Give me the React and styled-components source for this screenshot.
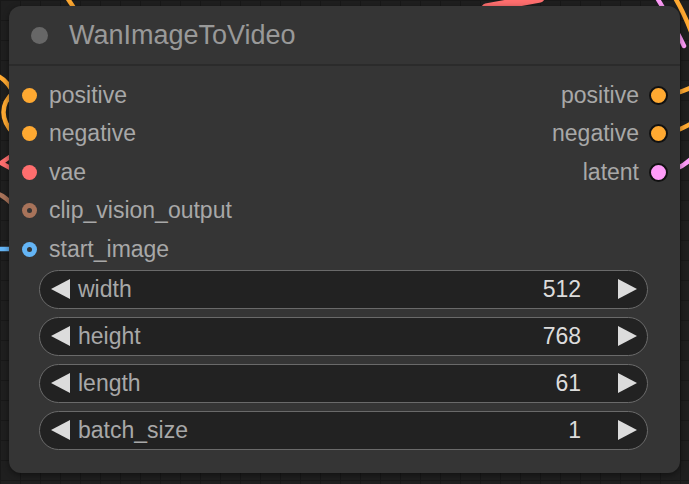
import React from 'react';
import styled, { createGlobalStyle } from 'styled-components';

const GlobalStyle = createGlobalStyle`
  html, body {
    margin: 0;
    padding: 0;
    background: #1f1f1f;
  }
  * {
    box-sizing: border-box;
  }
`;

const Canvas = styled.div`
  position: relative;
  width: 689px;
  height: 484px;
  overflow: hidden;
  padding: 6px 0 0 9px;
  background-color: #1f1f1f;
  background-image:
    linear-gradient(to right, #181818 1px, transparent 1px),
    linear-gradient(to bottom, #181818 1px, transparent 1px);
  background-size: 20px 20px;
  font-family: 'Liberation Sans', Arial, sans-serif;
`;

const Wires = styled.svg`
  position: absolute;
  inset: 0;
  pointer-events: none;
`;

const Node = styled.div`
  position: relative;
  width: 671px;
  height: 467px;
  background: #353535;
  border-radius: 12px;
  box-shadow: 0 2px 6px rgba(0, 0, 0, 0.45);
  display: flex;
  flex-direction: column;
`;

const TitleBar = styled.div`
  height: 60px;
  display: flex;
  align-items: center;
  gap: 21px;
  padding-left: 22px;
  border-bottom: 2px solid #2b2b2b;
`;

const TitleDot = styled.span`
  width: 17px;
  height: 17px;
  border-radius: 50%;
  background: #676767;
`;

const Title = styled.span`
  font-size: 27px;
  color: #999;
`;

const Slots = styled.div`
  display: flex;
  justify-content: space-between;
  padding: 10px 0 0;
`;

const SlotColumn = styled.div`
  display: flex;
  flex-direction: column;
  align-items: ${({ $right }) => ($right ? 'flex-end' : 'flex-start')};
`;

const Slot = styled.div`
  height: 38.5px;
  display: flex;
  align-items: center;
  gap: ${({ $right }) => ($right ? '10px' : '12px')};
  padding: ${({ $right }) => ($right ? '0 12px 0 0' : '0 0 0 13px')};
  font-size: 23px;
  color: #a8a8a8;
`;

const Dot = styled.span`
  width: ${({ $linked }) => ($linked ? '19px' : '15px')};
  height: ${({ $linked }) => ($linked ? '19px' : '15px')};
  border-radius: 50%;
  background: ${({ $color }) => $color};
  border: ${({ $linked }) => ($linked ? '2px solid #111' : 'none')};
  display: flex;
  align-items: center;
  justify-content: center;

  &::after {
    content: '';
    display: ${({ $hollow }) => ($hollow ? 'block' : 'none')};
    width: 5px;
    height: 5px;
    border-radius: 50%;
    background: #353535;
  }
`;

const Widgets = styled.div`
  display: flex;
  flex-direction: column;
  gap: 8px;
  padding: 1px 32px 0 30px;
`;

const Widget = styled.div`
  height: 39px;
  display: flex;
  align-items: center;
  padding: 0 10px 0 11px;
  background: #222;
  border: 1.5px solid #6a6a6a;
  border-radius: 20px;
  font-size: 23px;
`;

const Arrow = styled.span`
  width: 0;
  height: 0;
  border-top: 10px solid transparent;
  border-bottom: 10px solid transparent;
  ${({ $dir }) =>
    $dir === 'left'
      ? 'border-right: 19px solid #dcdcdc;'
      : 'border-left: 19px solid #dcdcdc;'}
`;

const WidgetLabel = styled.span`
  flex: 1;
  margin-left: 8px;
  color: #a8a8a8;
`;

const WidgetValue = styled.span`
  color: #dcdcdc;
  margin-right: 37px;
`;

const inputs = [
  { name: 'positive', color: '#ffa931' },
  { name: 'negative', color: '#ffa931' },
  { name: 'vae', color: '#ff6e6e' },
  { name: 'clip_vision_output', color: '#a8735a', hollow: true },
  { name: 'start_image', color: '#64b5f6', hollow: true },
];

const outputs = [
  { name: 'positive', color: '#ffa931' },
  { name: 'negative', color: '#ffa931' },
  { name: 'latent', color: '#ff9cf9' },
];

const widgets = [
  { name: 'width', value: 512 },
  { name: 'height', value: 768 },
  { name: 'length', value: 61 },
  { name: 'batch_size', value: 1 },
];

const App = () => (
  <>
    <GlobalStyle />
    <Canvas>
      <Wires width="689" height="484" viewBox="0 0 689 484">
        <g fill="none" strokeWidth="4.5" strokeLinecap="round">
          <path d="M 66 -4 L 74 8" stroke="#ffa931" />
          <path d="M -2 76 C 6 80, 10 86, 14 94" stroke="#ffa931" />
          <path d="M 14 92 C 0 104, 0 120, 14 134" stroke="#ffa931" />
          <path d="M 14 154 L 1 163 L 14 170" stroke="#ff6e6e" />
          <path d="M -2 194 C 4 196, 8 200, 14 206" stroke="#a8735a" />
          <path d="M -2 249 L 24 249" stroke="#64b5f6" />
          <path d="M 660 95 C 672 95, 680 93, 692 87" stroke="#ffa931" />
          <path d="M 660 133 C 672 133, 680 130, 692 123" stroke="#ffa931" />
          <path d="M 660 172 C 672 172, 682 168, 692 158" stroke="#ff9cf9" />
          <path d="M 656 -4 C 664 10, 674 24, 684 46" stroke="#ff9cf9" />
          <path d="M 674 -4 C 680 6, 686 18, 692 34" stroke="#ffa931" />
          <path d="M 486 8 L 540 -2" stroke="#ff6e6e" strokeWidth="9" />
        </g>
      </Wires>
      <Node>
        <TitleBar>
          <TitleDot />
          <Title>WanImageToVideo</Title>
        </TitleBar>
        <Slots>
          <SlotColumn>
            {inputs.map((s) => (
              <Slot key={s.name}>
                <Dot $color={s.color} $hollow={s.hollow} />
                {s.name}
              </Slot>
            ))}
          </SlotColumn>
          <SlotColumn $right>
            {outputs.map((s) => (
              <Slot key={s.name} $right>
                {s.name}
                <Dot $color={s.color} $linked />
              </Slot>
            ))}
          </SlotColumn>
        </Slots>
        <Widgets>
          {widgets.map((w) => (
            <Widget key={w.name}>
              <Arrow $dir="left" />
              <WidgetLabel>{w.name}</WidgetLabel>
              <WidgetValue>{w.value}</WidgetValue>
              <Arrow $dir="right" />
            </Widget>
          ))}
        </Widgets>
      </Node>
    </Canvas>
  </>
);

export default App;
